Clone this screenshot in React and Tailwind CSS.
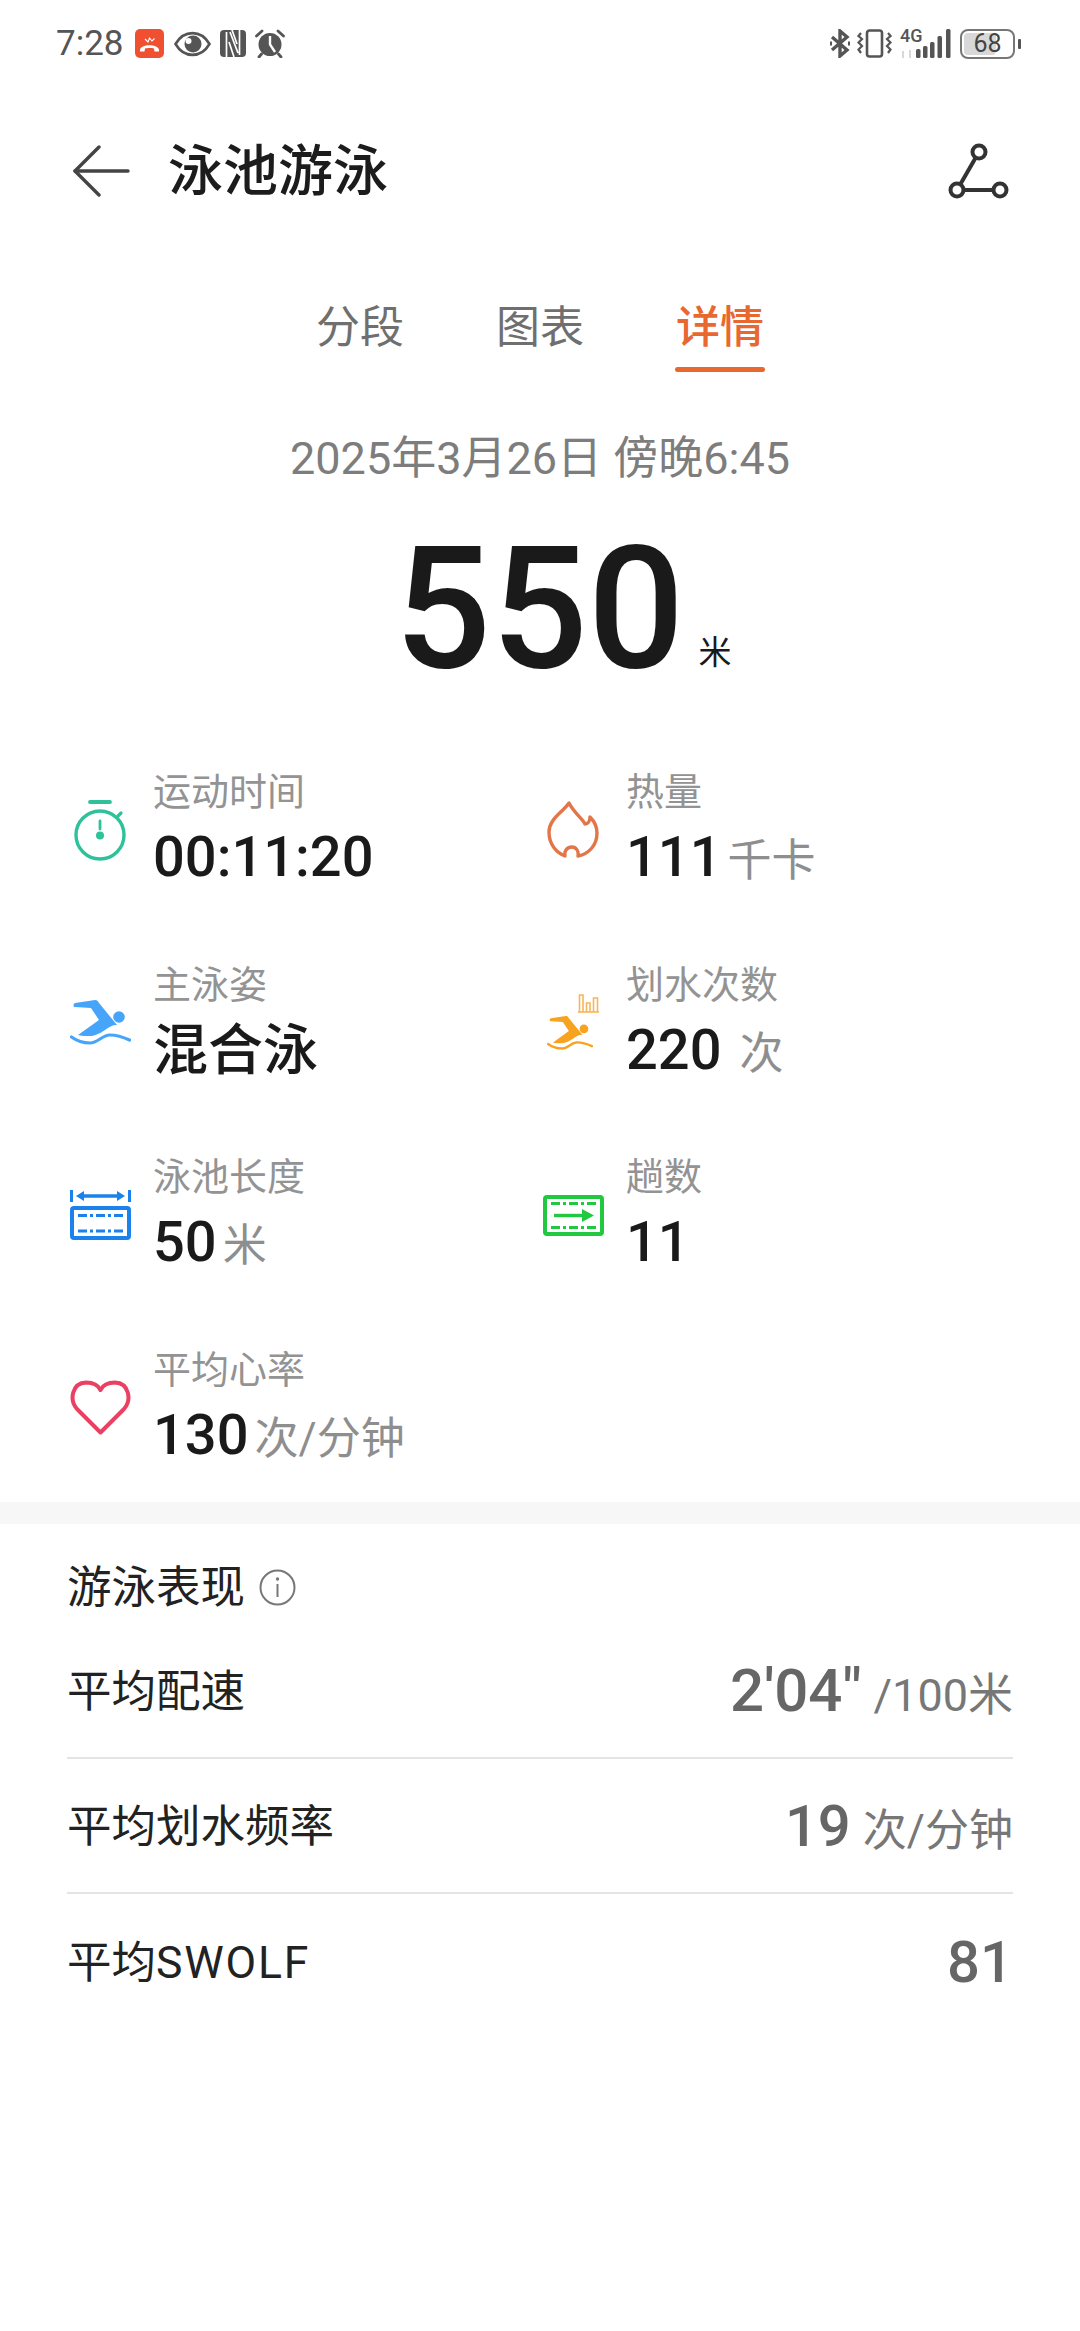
import { useState } from "react";

const fontStack = "font-['Roboto','Noto_Sans_CJK_SC',sans-serif]";

function BackIcon() {
  return (
    <svg width="58" height="52" viewBox="0 0 58 52" fill="none" stroke="#444" strokeWidth="3.4" strokeLinecap="round" strokeLinejoin="round">
      <path d="M27 2 L3 26 L27 50" />
      <path d="M3 26 H56" />
    </svg>
  );
}

function RouteIcon() {
  return (
    <svg width="62" height="56" viewBox="0 0 62 56" fill="none" stroke="#333" strokeWidth="4">
      <circle cx="31" cy="9" r="6.5" />
      <circle cx="9" cy="47" r="6.5" />
      <circle cx="52" cy="47" r="6.5" />
      <path d="M27.5 15 L12.5 41" />
      <path d="M15.5 47 H45.5" />
    </svg>
  );
}

function MissedCallIcon() {
  return (
    <svg width="29" height="29" viewBox="0 0 29 29">
      <rect width="29" height="29" rx="5" fill="#f0502f" />
      <path d="M10 10 L13 13 L14.5 9 L17 12 L19.5 9.5" fill="none" stroke="#fff" strokeWidth="1.1" />
      <path d="M5 21 C5 14.5 24 14.5 24 21 L24 22.5 L19.5 22.5 L19 19.5 C17 18.7 12 18.7 10 19.5 L9.5 22.5 L5 22.5 Z" fill="#fff" />
    </svg>
  );
}

function EyeIcon() {
  return (
    <svg width="37" height="26" viewBox="0 0 37 26">
      <path d="M1.5 13 C10 -1.5 27 -1.5 35.5 13 C27 27.5 10 27.5 1.5 13 Z" fill="none" stroke="#555" strokeWidth="2.6" />
      <circle cx="19" cy="13" r="8.5" fill="#555" />
      <circle cx="14.5" cy="10" r="3" fill="#fff" />
    </svg>
  );
}

function NfcIcon() {
  return (
    <svg width="26" height="27" viewBox="0 0 26 27">
      <rect width="26" height="27" rx="4" fill="#555" />
      <path d="M6.5 27 V2 M19.5 0 V25 M10 2 L18 23 M9 12 L14 27 M12 0 L17 14" fill="none" stroke="#fff" strokeWidth="1.7" />
    </svg>
  );
}

function AlarmIcon() {
  return (
    <svg width="30" height="29" viewBox="0 0 30 29">
      <circle cx="15" cy="15.5" r="11.5" fill="#555" />
      <path d="M15 7 V15.5 L20 23" fill="none" stroke="#fff" strokeWidth="2.4" />
      <path d="M1.5 7 L7 2 M28.5 7 L23 2 M6.5 25 L4 28 M23.5 25 L26 28" stroke="#555" strokeWidth="2.8" strokeLinecap="round" />
    </svg>
  );
}

function BluetoothIcon() {
  return (
    <svg width="20" height="29" viewBox="0 0 20 29" fill="none" stroke="#555" strokeWidth="3.4">
      <path d="M2 8 L17 21 L10 27 V2 L17 8 L2 21" />
      <path d="M0 14.5 H2 M18 14.5 H20" strokeWidth="4" />
    </svg>
  );
}

function VibrateIcon() {
  return (
    <svg width="35" height="29" viewBox="0 0 35 29" fill="none" stroke="#555" strokeWidth="2.2">
      <rect x="10" y="1.5" width="15" height="26" rx="2.5" strokeWidth="2.6" />
      <path d="M4 4 L1.5 7 L5 10 L1.5 13.5 L5 17 L1.5 20.5 L4 24" />
      <path d="M31 4 L33.5 7 L30 10 L33.5 13.5 L30 17 L33.5 20.5 L31 24" />
    </svg>
  );
}

function SignalIcon() {
  return (
    <svg width="51" height="29" viewBox="0 0 51 29" fill="#555">
      <rect x="16" y="20" width="4.5" height="9" rx="1.5" />
      <rect x="23" y="17" width="4.5" height="12" rx="1.5" />
      <rect x="30" y="13" width="4.5" height="16" rx="1.5" />
      <rect x="37.5" y="7" width="4.5" height="22" rx="1.5" />
      <rect x="46" y="0" width="4.5" height="29" rx="1.5" />
      <path d="M2 22 H4 V29 H2 Z M9 21 H11 V29 H9 Z" fill="#d8d8d8" />
    </svg>
  );
}

function StopwatchIcon() {
  return (
    <svg width="52" height="61" viewBox="0 0 52 61" fill="none" stroke="#2fc29a" strokeLinecap="round">
      <path d="M16 2 H36" strokeWidth="3.8" />
      <circle cx="26" cy="35" r="24" strokeWidth="3.4" />
      <path d="M44 16 L47 13" strokeWidth="3.2" />
      <path d="M26 21 V29" strokeWidth="2.8" />
      <circle cx="26" cy="35.5" r="4" fill="#2fc29a" stroke="none" />
    </svg>
  );
}

function FlameIcon() {
  return (
    <svg width="52" height="58" viewBox="0 0 52 58" fill="none" stroke="#e2764a" strokeWidth="3.4" strokeLinejoin="round">
      <path d="M22 2 C15 12 2 18 2 31 C2 44 10 52 18 55 C17 50 20 46 25 46 C29 46 32 50 31 55 C42 53 50 44 50 32 C50 26 47 20 43 16 C43 20 41 23 38 23 C36 18 27 12 22 2 Z" />
    </svg>
  );
}

function SwimmerIcon({ color, width = 61 }) {
  return (
    <svg width={width} viewBox="0 0 61 46" fill={color} className="block">
      <path d="M5 3 L25 0 C27 0 28 1 29 3 L47 25 C42 25 39 27 35 30 C29 34 24 36 20 36 C15 36 11 36 8 35 L29 20 L21 8 L5 7 C3 7 3 4 5 3 Z" />
      <circle cx="49" cy="17" r="5.8" />
      <path d="M1.5 37 C7 41 13 43 20 43 C28 43 32 35 40 35 C48 35 53 37 59.5 40" fill="none" stroke={color} strokeWidth="3.2" strokeLinecap="round" />
    </svg>
  );
}

function StrokesIcon() {
  return (
    <div className="flex flex-col w-[52px]">
      <svg width="21" height="19" viewBox="0 0 21 19" fill="none" stroke="#f6b65c" strokeWidth="1.6" className="self-end">
        <path d="M0 18 H21" />
        <path d="M1.5 18 V1 H5 V18" />
        <path d="M8.5 18 V9 H12 V18" />
        <path d="M15.5 18 V4 H19.5 V18" />
      </svg>
      <div className="mt-[3px] self-start">
        <SwimmerIcon color="#f8a31f" width={46} />
      </div>
    </div>
  );
}

function PoolLengthIcon() {
  return (
    <svg width="61" height="50" viewBox="0 0 61 50" fill="none" stroke="#1a82ea">
      <path d="M1.5 0 V12 M59.5 0 V12" strokeWidth="3" />
      <path d="M10 6 H51" strokeWidth="3.4" />
      <path d="M6 6 L14 1 V11 Z M55 6 L47 1 V11 Z" fill="#1a82ea" stroke="none" />
      <rect x="2" y="18" width="57" height="30" rx="2" strokeWidth="4" />
      <path d="M8 25.5 H53 M8 41 H53" strokeWidth="2.8" strokeDasharray="9 3 3 3" />
    </svg>
  );
}

function LapsIcon() {
  return (
    <svg width="61" height="41" viewBox="0 0 61 41" fill="none" stroke="#22c83f">
      <rect x="2" y="2" width="57" height="37" rx="2" strokeWidth="4" />
      <path d="M8 8.5 H53 M8 32.5 H53" strokeWidth="2.8" strokeDasharray="9 3 3 3" />
      <path d="M11 20.5 H42" strokeWidth="3.4" />
      <path d="M39 14 L51 20.5 L39 27 Z" fill="#22c83f" stroke="none" />
    </svg>
  );
}

function HeartIcon() {
  return (
    <svg width="61" height="55" viewBox="0 0 61 55" fill="none" stroke="#ea4064" strokeWidth="4" strokeLinejoin="round">
      <path d="M30.5 52.5 L7 29 C-1 20 2 3 16 2.5 C23 2.5 28 5 30.5 10 C33 5 38 2.5 45 2.5 C59 3 62 20 54 29 Z" />
    </svg>
  );
}

function InfoIcon() {
  return (
    <svg width="37" height="37" viewBox="0 0 37 37" fill="none" stroke="#777" strokeWidth="2">
      <circle cx="18.5" cy="18.5" r="17" />
      <path d="M18.5 15 V28" />
      <circle cx="18.5" cy="10" r="1.7" fill="#777" stroke="none" />
    </svg>
  );
}

function StatusBar() {
  return (
    <div className="h-[86px] pl-[56px] pr-[59px] pt-[29px] flex items-start justify-between">
      <div className="flex items-center h-[29px]">
        <span className="text-[35px] leading-[29px] text-[#555] mr-[11px]">7:28</span>
        <MissedCallIcon />
        <div className="ml-[10px]"><EyeIcon /></div>
        <div className="ml-[9px]"><NfcIcon /></div>
        <div className="ml-[9px]"><AlarmIcon /></div>
      </div>
      <div className="flex items-center h-[29px]">
        <BluetoothIcon />
        <div className="ml-[7px]"><VibrateIcon /></div>
        <div className="relative ml-[8px]">
          <SignalIcon />
          <span className="absolute left-0 -top-[1px] text-[18px] leading-[16px] font-medium text-[#555]">4G</span>
        </div>
        <div className="flex items-center gap-[3px] ml-[9px]">
          <div className="w-[55px] h-[30px] rounded-[8px] border-[2px] border-[#777] p-[2px] relative">
            <div className="h-full w-[68%] bg-[#d8d8d8] rounded-[4px]"></div>
            <span className="absolute inset-0 flex items-center justify-center text-[25px] leading-none text-[#444]">68</span>
          </div>
          <div className="w-[3px] h-[10px] bg-[#555] rounded-[1px]"></div>
        </div>
      </div>
    </div>
  );
}

function Stat({ icon, label, value, unit, bold, unitGap }) {
  return (
    <div className="flex items-center h-[126px]">
      <div className="w-[66px] mr-[20px] flex justify-center">{icon}</div>
      <div>
        <div className="text-[38px] leading-[50px] text-[#939393]">{label}</div>
        <div className="flex items-baseline h-[76px] leading-[80px]">
          <span className={`${bold ? "text-[55px]" : "text-[56px]"} font-medium text-[#1a1a1a]`}>{value}</span>
          {unit && <span className={`text-[44px] text-[#8e8e8e] ${unitGap ? "ml-[18px]" : "ml-[6px]"}`}>{unit}</span>}
        </div>
      </div>
    </div>
  );
}

function MetricRow({ label, value, unit, last, small }) {
  return (
    <div className={`h-[135px] flex items-center justify-between ${last ? "" : "border-b-2 border-[#e4e4e4]"}`}>
      <span className="text-[44.5px] text-[#222] pt-[4px]">{label}</span>
      <span className="flex items-baseline pt-[2px]">
        <span className={`${small ? "text-[58px]" : "text-[60px]"} font-medium text-[#666]`}>{value}</span>
        {unit && <span className={`${small ? "text-[44px]" : "text-[45px]"} text-[#777] ml-[12px]`}>{unit}</span>}
      </span>
    </div>
  );
}

export default function App() {
  const [tab] = useState("详情");
  const tabs = ["分段", "图表", "详情"];

  return (
    <div className={`${fontStack} w-[1080px] h-[2331px] bg-white overflow-hidden`}>
      <StatusBar />

      <div className="mt-[43px] h-[84px] pl-[72px] pr-[70px] flex items-center justify-between">
        <div className="flex items-center">
          <BackIcon />
          <span className="ml-[38px] text-[55px] font-medium text-[#1c1c1c]">泳池游泳</span>
        </div>
        <RouteIcon />
      </div>

      <div className="mt-[76px] flex justify-center gap-[90px]">
        {tabs.map((t) => (
          <div key={t} className="flex flex-col items-center">
            <span className={`text-[44px] leading-[78px] ${t === tab ? "text-[#e8682f] font-medium" : "text-[#6f6f6f]"}`}>{t}</span>
            <div className={`w-[90px] h-[5px] rounded-full ${t === tab ? "bg-[#e8682f]" : ""}`}></div>
          </div>
        ))}
      </div>

      <div className="mt-[57px] text-center text-[45px] leading-[60px] text-[#7d7d7d]">2025年3月26日 傍晚6:45</div>

      <div className="mt-[35px] h-[170px] flex items-baseline justify-center pl-[46px]">
        <span className="text-[170px] leading-[170px] font-[480] text-[#1a1a1a]">550</span>
        <span className="ml-[14px] -translate-y-[3px] text-[33px] text-[#1a1a1a]">米</span>
      </div>

      <div className="mt-[73px] pl-[67px] grid grid-cols-[473px_1fr] gap-y-[66.5px]">
        <Stat icon={<StopwatchIcon />} label="运动时间" value="00:11:20" />
        <Stat icon={<FlameIcon />} label="热量" value="111" unit="千卡" />
        <Stat icon={<SwimmerIcon color="#46a5fa" />} label="主泳姿" value="混合泳" bold />
        <Stat icon={<StrokesIcon />} label="划水次数" value="220" unit="次" unitGap />
        <Stat icon={<PoolLengthIcon />} label="泳池长度" value="50" unit="米" />
        <Stat icon={<LapsIcon />} label="趟数" value="11" />
        <Stat icon={<HeartIcon />} label="平均心率" value="130" unit="次/分钟" />
      </div>

      <div className="h-[22px] bg-[#f7f7f7] mt-[31px]"></div>

      <div className="px-[67px]">
        <div className="mt-[34px] mb-[6px] flex items-center gap-[14px]">
          <span className="text-[44.5px] leading-[60px] text-[#222]">游泳表现</span>
          <InfoIcon />
        </div>
        <MetricRow label="平均配速" value={`2'04"`} unit="/100米" />
        <MetricRow label="平均划水频率" value="19" unit="次/分钟" small />
        <MetricRow label={<>平均<span className="tracking-[1.8px]">SWOLF</span></>} value="81" last small />
      </div>
    </div>
  );
}
